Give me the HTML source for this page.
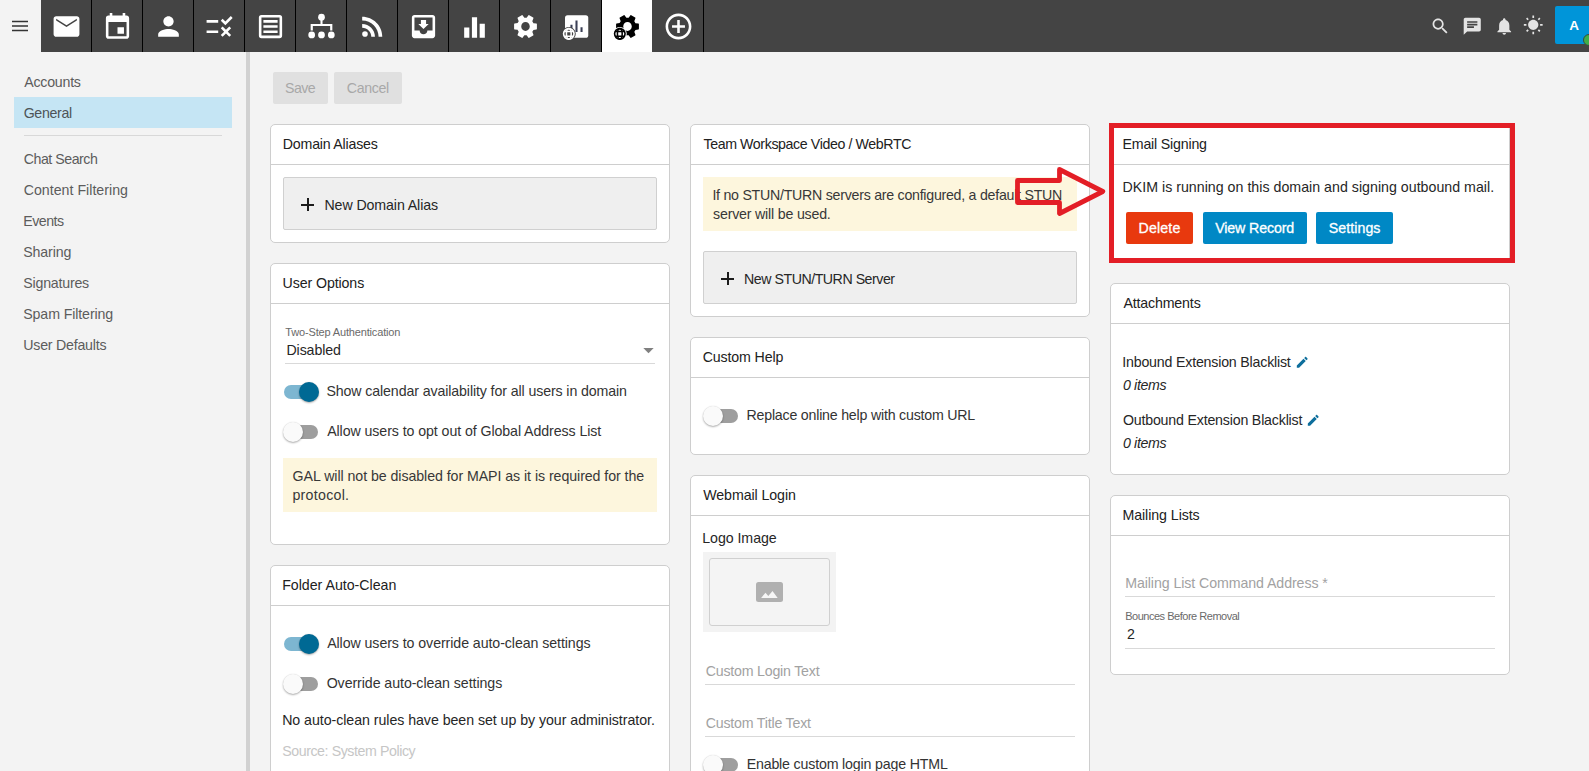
<!DOCTYPE html>
<html lang="en">
<head>
<meta charset="utf-8">
<title>Domain Settings - General</title>
<style>
*{box-sizing:border-box;margin:0;padding:0}
html,body{width:1589px;height:771px;overflow:hidden;background:#f3f3f3;font-family:"Liberation Sans",sans-serif;font-size:14.2px;color:#262626}
.abs{position:absolute}
#top{position:absolute;left:41px;top:0;width:1548px;height:52px;background:#444}
.tab{position:absolute;top:0;width:51px;height:52px;border-right:1px solid #000}
.tab svg{position:absolute;left:0;top:0}
.tab.active{background:#fff;border-right-color:#444}
#side{position:absolute;left:0;top:0;width:246px;height:771px}
.navbg{position:absolute;left:14px;top:97px;width:218px;height:31px;background:#c5e5f4}
#split{position:absolute;left:246px;top:52px;width:4px;height:719px;background:#d1d1d1}
.btn{position:absolute;height:32px;border-radius:2px}
.card{position:absolute;width:400px;background:#fff;border:1px solid #cecece;border-radius:5px}
.hl{position:absolute;left:0;top:39px;width:398px;height:1px;background:#cecece}
.t{position:absolute;white-space:nowrap;line-height:16px;color:#262626}
.t.h{color:#212121}
.t.nv{color:#5c5c5c}
.t.nv.sel{color:#4d5357}
.t.dis{color:#a8a8a8}
.t.tl{color:#333}
.t.nt{color:#383838}
.t.ph{color:#a2a2a2}
.t.src{color:#c6c6c6}
.t.sm{color:#6a6a6a}
.t.it{font-style:italic}
.t.bt{color:#fff;-webkit-text-stroke:.3px #fff}
.addbtn{position:absolute;left:12px;width:374px;height:53px;background:#efefef;border:1px solid #d0d0d0;border-radius:2px}
.plus{position:absolute;width:13px;height:13px}
.plus:before{content:"";position:absolute;left:0;top:5.5px;width:13px;height:2px;background:#1c1c1c}
.plus:after{content:"";position:absolute;left:5.5px;top:0;width:2px;height:13px;background:#1c1c1c}
.note{position:absolute;left:12px;width:374px;height:54px;background:#fdf6dd}
.tog{position:absolute;width:36px;height:20px}
.tog:before{content:"";position:absolute;left:1px;top:3px;width:34px;height:14px;border-radius:7px;background:#9e9e9e}
.tog:after{content:"";position:absolute;left:0;top:0;width:20px;height:20px;border-radius:50%;background:#fafafa;box-shadow:0 1px 2px rgba(0,0,0,.32),0 0 1px rgba(0,0,0,.12)}
.tog.on:before{background:#7db6d1}
.tog.on:after{left:16px;background:#006994}
.ul{position:absolute;height:1px;background:#d9d9d9}
</style>
</head>
<body>
<!-- hamburger -->
<svg class="abs" style="left:0;top:0" width="41" height="52"><path d="M12 21.5h16M12 26h16M12 30.5h16" stroke="#333" stroke-width="1.6"/></svg>
<div id="top">
<div class="tab" style="left:0px"><svg width="31" height="31" viewBox="0 0 24 24" style="left:10px;top:10.5px" fill="#fff"><path d="M20 4H4c-1.1 0-1.99.9-1.99 2L2 18c0 1.1.9 2 2 2h16c1.1 0 2-.9 2-2V6c0-1.1-.9-2-2-2zm0 3.300l-8 5-8-5V6l8 5 8-5v1.300z"/></svg></div>
<div class="tab" style="left:51px"><svg width="31" height="31" viewBox="0 0 24 24" style="left:10px;top:10.5px" fill="#fff"><path transform="translate(0 .55)" d="M17 12h-5v5h5v-5zM16 1v2H8V1H6v2H5c-1.11 0-1.99.9-1.99 2L3 19c0 1.1.89 2 2 2h14c1.1 0 2-.9 2-2V5c0-1.1-.9-2-2-2h-1V1h-2zm3 18H5V8h14v11z"/></svg></div>
<div class="tab" style="left:102px"><svg width="31" height="31" viewBox="0 0 24 24" style="left:10px;top:10.5px" fill="#fff"><path d="M12 12c2.21 0 4-1.79 4-4s-1.79-4-4-4-4 1.79-4 4 1.79 4 4 4zm0 2c-2.67 0-8 1.34-8 4v2h16v-2c0-2.66-5.33-4-8-4z"/></svg></div>
<div class="tab" style="left:153px"><svg width="31" height="31" viewBox="0 0 24 24" style="left:10px;top:10.5px" fill="#fff"><path d="M16.54 11L13 7.46l1.41-1.41 2.12 2.12 4.24-4.24 1.41 1.41L16.54 11zM11 7H2v2h9V7zm10 6.41L19.59 12 17 14.59 14.41 12 13 13.41 15.59 16 13 18.59 14.41 20 17 17.41 19.59 20 21 18.59 18.41 16 21 13.41zM11 15H2v2h9v-2z"/></svg></div>
<div class="tab" style="left:204px"><svg width="31" height="31" viewBox="0 0 24 24" style="left:10px;top:10.5px" fill="#fff"><path d="M19 5v14H5V5h14m0-2H5a2 2 0 0 0-2 2v14a2 2 0 0 0 2 2h14a2 2 0 0 0 2-2V5a2 2 0 0 0-2-2zM6.500 7h11v2h-11zM6.500 11h11v2h-11zM6.500 15h11v2h-11z"/></svg></div>
<div class="tab" style="left:255px"><svg width="31" height="31" viewBox="0 0 24 24" style="left:10px;top:10.5px" fill="#fff"><circle cx="12" cy="4.8" r="2.600"/><circle cx="4.4" cy="18.5" r="2.600"/><circle cx="12" cy="18.5" r="2.600"/><circle cx="19.6" cy="18.5" r="2.600"/><path d="M11.2 7h1.6v3h7.6v5h-1.7v-3.4H5.3V15H3.6v-5h7.6z"/></svg></div>
<div class="tab" style="left:306px"><svg width="31" height="31" viewBox="0 0 24 24" style="left:10px;top:10.5px" fill="#fff"><path d="M6.18 15.64a2.18 2.18 0 1 0 0 4.36 2.18 2.18 0 0 0 0-4.36zM4 4.44v2.83c7.03 0 12.73 5.7 12.73 12.73h2.83c0-8.59-6.97-15.56-15.56-15.56zm0 5.66v2.83c3.9 0 7.07 3.17 7.07 7.07h2.83c0-5.47-4.43-9.9-9.9-9.9z"/></svg></div>
<div class="tab" style="left:357px"><svg width="31" height="31" viewBox="0 0 24 24" style="left:10px;top:10.5px" fill="#fff"><path d="M19 3H4.99c-1.11 0-1.98.9-1.98 2L3 19c0 1.1.88 2 1.99 2H19c1.1 0 2-.9 2-2V5c0-1.1-.9-2-2-2zm0 12h-4c0 1.66-1.35 3-3 3s-3-1.34-3-3H4.99V5H19v10zm-3-5h-2V7h-4v3H8l4 4 4-4z"/></svg></div>
<div class="tab" style="left:408px"><svg width="31" height="31" viewBox="0 0 24 24" style="left:10px;top:10.5px" fill="#fff"><path transform="translate(0 .8)" d="M10 20h4V4h-4v16zm-6 0h4v-8H4v8zM16 9v11h4V9h-4z"/></svg></div>
<div class="tab" style="left:459px"><svg width="31" height="31" viewBox="0 0 24 24" style="left:10px;top:10.5px" fill="#fff"><g transform="translate(12 12) scale(1 1.030) rotate(90) scale(.92) translate(-12 -12)"><path d="M19.14 12.94c.04-.3.06-.61.06-.94 0-.32-.02-.64-.07-.94l2.03-1.58c.18-.14.23-.41.12-.61l-1.92-3.32c-.12-.22-.37-.29-.59-.22l-2.39.96c-.5-.38-1.03-.7-1.62-.94l-.36-2.54c-.04-.24-.24-.41-.48-.41h-3.84c-.24 0-.43.17-.47.41l-.36 2.54c-.59.24-1.13.57-1.62.94l-2.39-.96c-.22-.08-.47 0-.59.22L2.74 8.87c-.12.21-.08.47.12.61l2.03 1.58c-.05.3-.09.63-.09.94s.02.64.07.94l-2.03 1.58c-.18.14-.23.41-.12.61l1.92 3.32c.12.22.37.29.59.22l2.39-.96c.5.38 1.03.7 1.62.94l.36 2.54c.05.24.24.41.48.41h3.84c.24 0 .44-.17.47-.41l.36-2.54c.59-.24 1.13-.56 1.62-.94l2.39.96c.22.08.47 0 .59-.22l1.92-3.32c.12-.22.07-.47-.12-.61l-2.01-1.58zM12 15.600c-1.98 0-3.600-1.620-3.600-3.600s1.620-3.600 3.600-3.600 3.600 1.620 3.600 3.600-1.620 3.600-3.600 3.600z"/></g></svg></div>
<div class="tab" style="left:510px"><svg width="31" height="31" viewBox="0 0 24 24" style="left:10px;top:10.5px" fill="#fff"><rect x="3.100" y="3.200" width="18" height="17.500" rx="2"/><path fill="#3a3f55" d="M7.300 10.700h1.600v5.500h-1.600zM11.200 7.400h1.600v8.800h-1.600zM15.100 12.600h1.600v3.600h-1.600z"/><circle cx="6.05" cy="17.7" r="5.400" fill="#444"/><g fill="none" stroke="#fff" stroke-width="1.200"><circle cx="6.05" cy="17.7" r="4.050" fill="#444" stroke-width="1.250"/><ellipse cx="6.05" cy="17.7" rx="1.850" ry="4.050"/><path d="M2.450 15.800h7.200M2.450 19.600h7.200"/></g></svg></div>
<div class="tab active" style="left:561px"><svg width="31" height="31" viewBox="0 0 24 24" style="left:10px;top:10.5px" fill="#000"><g transform="translate(12 12) scale(1 1.030) rotate(90) scale(.92) translate(-12 -12)"><path d="M19.14 12.94c.04-.3.06-.61.06-.94 0-.32-.02-.64-.07-.94l2.03-1.58c.18-.14.23-.41.12-.61l-1.92-3.32c-.12-.22-.37-.29-.59-.22l-2.39.96c-.5-.38-1.03-.7-1.62-.94l-.36-2.54c-.04-.24-.24-.41-.48-.41h-3.84c-.24 0-.43.17-.47.41l-.36 2.54c-.59.24-1.13.57-1.62.94l-2.39-.96c-.22-.08-.47 0-.59.22L2.74 8.87c-.12.21-.08.47.12.61l2.03 1.58c-.05.3-.09.63-.09.94s.02.64.07.94l-2.03 1.58c-.18.14-.23.41-.12.61l1.92 3.32c.12.22.37.29.59.22l2.39-.96c.5.38 1.03.7 1.62.94l.36 2.54c.05.24.24.41.48.41h3.84c.24 0 .44-.17.47-.41l.36-2.54c.59-.24 1.13-.56 1.62-.94l2.39.96c.22.08.47 0 .59-.22l1.92-3.32c.12-.22.07-.47-.12-.61l-2.01-1.58zM12 15.600c-1.98 0-3.600-1.620-3.600-3.600s1.620-3.600 3.600-3.600 3.600 1.620 3.600 3.600-1.620 3.600-3.600 3.600z"/></g><circle cx="6.05" cy="17.7" r="5.400" fill="#fff"/><g fill="none" stroke="#000" stroke-width="1.200"><circle cx="6.05" cy="17.7" r="4.050" fill="#fff" stroke-width="1.250"/><ellipse cx="6.05" cy="17.7" rx="1.850" ry="4.050"/><path d="M2.450 15.800h7.200M2.450 19.600h7.200"/></g></svg></div>
<div class="tab" style="left:612px"><svg width="31" height="31" viewBox="0 0 24 24" style="left:10px;top:10.5px" fill="#fff"><path d="M13 7h-2v4H7v2h4v4h2v-4h4v-2h-4V7zm-1-5C6.480 2 2 6.480 2 12s4.480 10 10 10 10-4.480 10-10S17.520 2 12 2zm0 18c-4.410 0-8-3.590-8-8s3.590-8 8-8 8 3.590 8 8-3.590 8-8 8z"/></svg></div>
<svg class="abs" style="left:1388.85px;top:16.05px" width="20.5" height="20.5" viewBox="0 0 24 24" fill="#e4e4e4"><path d="M15.5 14h-.79l-.28-.27C15.41 12.59 16 11.11 16 9.5 16 5.91 13.09 3 9.5 3S3 5.91 3 9.5 5.91 16 9.5 16c1.61 0 3.090-.59 4.230-1.570l.27.28v.79l5 4.990L20.490 19l-4.990-5zm-6 0C7.010 14 5 11.990 5 9.500S7.010 5 9.500 5 14 7.010 14 9.500 11.990 14 9.500 14z"/></svg>
<svg class="abs" style="left:1420.75px;top:15.55px" width="20.5" height="20.5" viewBox="0 0 24 24" fill="#e4e4e4"><path d="M20 2H4c-1.100 0-1.990.9-1.990 2L2 22l4-4h14c1.100 0 2-.9 2-2V4c0-1.100-.9-2-2-2zM6 9h12v2H6V9zm8 5H6v-2h8v2zm4-6H6V6h12v2z"/></svg>
<svg class="abs" style="left:1452.75px;top:16.05px" width="20.5" height="20.5" viewBox="0 0 24 24" fill="#e4e4e4"><path d="M12 22c1.100 0 2-.9 2-2h-4c0 1.100.89 2 2 2zm6-6v-5c0-3.070-1.640-5.640-4.500-6.320V4c0-.83-.67-1.500-1.500-1.500s-1.500.67-1.500 1.500v.68C7.630 5.360 6 7.920 6 11v5l-2 2v1h16v-1l-2-2z"/></svg>
<svg class="abs" style="left:1482.20px;top:15.10px" width="20.500" height="20.500" viewBox="0 0 24 24" fill="#e4e4e4"><path d="M6.760 4.840l-1.800-1.790-1.410 1.410 1.790 1.790 1.420-1.410zM4 10.500H1v2h3v-2zm9-9.950h-2V3.500h2V.55zm7.450 3.910l-1.410-1.410-1.790 1.790 1.410 1.410 1.790-1.790zm-3.210 13.700l1.790 1.800 1.410-1.410-1.800-1.790-1.400 1.400zM20 10.500v2h3v-2h-3zm-8-5c-3.310 0-6 2.690-6 6s2.690 6 6 6 6-2.690 6-6-2.690-6-6-6zm-1 16.950h2V19.500h-2v2.950zm-7.450-3.910l1.410 1.410 1.790-1.800-1.410-1.410-1.790 1.800z"/></svg>
<div class="abs" style="left:1514px;top:6px;width:38px;height:38px;border-radius:2px;background:#0095d9;color:#fff;font-weight:bold;font-size:13.500px;line-height:39px;text-align:center">A</div><div class="abs" style="left:1542px;top:34px;width:12px;height:12px;border-radius:50%;background:#3fae49;border:1.5px solid #3a4a3a"></div>
</div>


<div id="side">
<div class="navbg"></div>
<div class="abs" style="left:24px;top:135px;width:198px;height:1px;background:#d8d8d8"></div>
<span id="t_nav0" class="t nv" style="left:24.18px;top:74.00px;font-size:14.2px;letter-spacing:-0.228px;">Accounts</span>
<span id="t_nav1" class="t nv sel" style="left:23.65px;top:105.00px;font-size:14.2px;letter-spacing:-0.321px;">General</span>
<span id="t_nav2" class="t nv" style="left:23.70px;top:151.00px;font-size:14.2px;letter-spacing:-0.471px;">Chat Search</span>
<span id="t_nav3" class="t nv" style="left:23.70px;top:182.00px;font-size:14.2px;letter-spacing:0.009px;">Content Filtering</span>
<span id="t_nav4" class="t nv" style="left:23.30px;top:213.00px;font-size:14.2px;letter-spacing:-0.538px;">Events</span>
<span id="t_nav5" class="t nv" style="left:23.25px;top:244.00px;font-size:14.2px;letter-spacing:-0.140px;">Sharing</span>
<span id="t_nav6" class="t nv" style="left:23.25px;top:275.00px;font-size:14.2px;letter-spacing:-0.208px;">Signatures</span>
<span id="t_nav7" class="t nv" style="left:23.25px;top:306.00px;font-size:14.2px;letter-spacing:-0.116px;">Spam Filtering</span>
<span id="t_nav8" class="t nv" style="left:23.31px;top:337.00px;font-size:14.2px;letter-spacing:-0.229px;">User Defaults</span>
</div>
<div id="split"></div>
<div class="btn" style="left:273px;top:72px;width:55px;background:#e0e0e0"></div><span id="t_save" class="t dis" style="left:285.10px;top:80.00px;font-size:14.2px;letter-spacing:-0.618px;">Save</span>
<div class="btn" style="left:334px;top:72px;width:68px;background:#e0e0e0"></div><span id="t_cancel" class="t dis" style="left:346.73px;top:80.00px;font-size:14.2px;letter-spacing:-0.323px;">Cancel</span>
<!-- COLUMN 1 -->
<div class="card" style="left:270px;top:124px;height:119px"><span id="t_h_da" class="t h" style="left:11.85px;top:11.00px;font-size:14.2px;letter-spacing:-0.220px;">Domain Aliases</span><div class="hl"></div>
<div class="addbtn" style="top:52px"></div><i class="plus" style="left:30.0px;top:73.0px"></i><span id="t_nda" class="t" style="left:53.47px;top:72.00px;font-size:14.2px;letter-spacing:-0.101px;">New Domain Alias</span>
</div>
<div class="card" style="left:270px;top:263px;height:282px"><span id="t_h_uo" class="t h" style="left:11.52px;top:11.00px;font-size:14.2px;letter-spacing:-0.095px;">User Options</span><div class="hl"></div>
<span id="t_tsa" class="t sm" style="left:14.32px;top:60.00px;font-size:11px;letter-spacing:-0.160px;">Two-Step Authentication</span>
<span id="t_dis" class="t" style="left:15.47px;top:78.00px;font-size:14.2px;letter-spacing:-0.115px;">Disabled</span>
<svg class="abs" style="left:372px;top:84px" width="11" height="6"><path d="M0.300 0h10.400l-5.200 5.200z" fill="#808080"/></svg>
<div class="ul" style="left:14px;top:99px;width:370px"></div>
<div class="tog on" style="left:12px;top:118px"></div>
<span id="t_showcal" class="t tl" style="left:55.39px;top:119.00px;font-size:14.2px;letter-spacing:-0.109px;">Show calendar availability for all users in domain</span>
<div class="tog" style="left:12px;top:158px"></div>
<span id="t_optout" class="t tl" style="left:56.16px;top:159.00px;font-size:14.2px;letter-spacing:-0.079px;">Allow users to opt out of Global Address List</span>
<div class="note" style="top:194px"></div><span id="t_gal1" class="t nt" style="left:21.62px;top:204.00px;font-size:14.2px;letter-spacing:-0.061px;">GAL will not be disabled for MAPI as it is required for the</span><span id="t_gal2" class="t nt" style="left:21.40px;top:223.00px;font-size:14.2px;letter-spacing:0.281px;">protocol.</span>
</div>
<div class="card" style="left:270px;top:565px;height:230px"><span id="t_h_fa" class="t h" style="left:11.15px;top:11.00px;font-size:14.2px;letter-spacing:-0.012px;">Folder Auto-Clean</span><div class="hl"></div>
<div class="tog on" style="left:12px;top:68px"></div>
<span id="t_allowov" class="t tl" style="left:56.16px;top:69.00px;font-size:14.2px;letter-spacing:-0.074px;">Allow users to override auto-clean settings</span>
<div class="tog" style="left:12px;top:108px"></div>
<span id="t_ovr" class="t tl" style="left:55.65px;top:109.00px;font-size:14.2px;letter-spacing:-0.068px;">Override auto-clean settings</span>
<span id="t_norules" class="t" style="left:11.14px;top:146.00px;font-size:14.2px;letter-spacing:-0.046px;">No auto-clean rules have been set up by your administrator.</span>
<span id="t_src" class="t src" style="left:11.17px;top:177.00px;font-size:14.2px;letter-spacing:-0.419px;">Source: System Policy</span>
</div>
<!-- COLUMN 2 -->
<div class="card" style="left:690px;top:124px;height:193px"><span id="t_h_tw" class="t h" style="left:12.45px;top:11.00px;font-size:14.2px;letter-spacing:-0.392px;">Team Workspace Video / WebRTC</span><div class="hl"></div>
<div class="note" style="top:52px"></div><span id="t_stun1" class="t nt" style="left:21.41px;top:62.00px;font-size:14.2px;letter-spacing:-0.257px;">If no STUN/TURN servers are configured, a default STUN</span><span id="t_stun2" class="t nt" style="left:22.09px;top:81.00px;font-size:14.2px;letter-spacing:-0.195px;">server will be used.</span>
<div class="addbtn" style="top:126px"></div><i class="plus" style="left:30.0px;top:147.0px"></i><span id="t_nst" class="t" style="left:53.06px;top:146.00px;font-size:14.2px;letter-spacing:-0.475px;">New STUN/TURN Server</span>
</div>
<div class="card" style="left:690px;top:337px;height:118px"><span id="t_h_ch" class="t h" style="left:11.70px;top:11.00px;font-size:14.2px;letter-spacing:-0.132px;">Custom Help</span><div class="hl"></div>
<div class="tog" style="left:12px;top:68px"></div>
<span id="t_repl" class="t tl" style="left:55.47px;top:69.00px;font-size:14.2px;letter-spacing:-0.206px;">Replace online help with custom URL</span>
</div>
<div class="card" style="left:690px;top:475px;height:320px"><span id="t_h_wl" class="t h" style="left:12.22px;top:11.00px;font-size:14.2px;letter-spacing:-0.080px;">Webmail Login</span><div class="hl"></div>
<span id="t_logo" class="t" style="left:11.27px;top:54.00px;font-size:14.2px;letter-spacing:-0.057px;">Logo Image</span>
<div class="abs" style="left:12px;top:76px;width:133px;height:80px;background:#f3f3f3"></div><div class="abs" style="left:18px;top:82px;width:121px;height:68px;background:#f4f4f4;border:1px solid #d0d0d0;border-radius:3px"></div><svg class="abs" style="left:65px;top:106px" width="27" height="20" viewBox="0 0 27 20"><rect width="27" height="20" rx="2.500" fill="#b0b0b0"/><path d="M5.100 15.900L9.500 10.700L12.300 14.100L16.500 8.900L21.700 15.900Z" fill="#f6f6f6"/></svg>
<span id="t_clt" class="t ph" style="left:14.68px;top:187.00px;font-size:14.2px;letter-spacing:-0.207px;">Custom Login Text</span>
<div class="ul" style="left:14px;top:208px;width:370px"></div>
<span id="t_ctt" class="t ph" style="left:14.68px;top:239.00px;font-size:14.2px;letter-spacing:-0.199px;">Custom Title Text</span>
<div class="ul" style="left:14px;top:260px;width:370px"></div>
<div class="tog" style="left:12px;top:279px"></div>
<span id="t_ench" class="t tl" style="left:55.65px;top:280.00px;font-size:14.2px;letter-spacing:-0.168px;">Enable custom login page HTML</span>
</div>
<!-- COLUMN 3 -->
<div class="card" style="left:1110px;top:124px;height:139px"><span id="t_h_es" class="t h" style="left:11.47px;top:11.00px;font-size:14.2px;letter-spacing:-0.186px;">Email Signing</span><div class="hl"></div>
<span id="t_dkim" class="t" style="left:11.47px;top:54.00px;font-size:14.2px;letter-spacing:0.018px;">DKIM is running on this domain and signing outbound mail.</span>
<div class="btn" style="left:15px;top:87px;width:67px;background:#e8390e"></div>
<span id="t_del" class="t bt" style="left:27.52px;top:95.00px;font-size:14.2px;letter-spacing:0.154px;">Delete</span>
<div class="btn" style="left:92px;top:87px;width:104px;background:#0088c5"></div>
<span id="t_view" class="t bt" style="left:104.20px;top:95.00px;font-size:14.2px;letter-spacing:-0.118px;">View Record</span>
<div class="btn" style="left:205px;top:87px;width:77px;background:#0088c5"></div>
<span id="t_sett" class="t bt" style="left:217.74px;top:95.00px;font-size:14.2px;letter-spacing:0.063px;">Settings</span>
</div>
<div class="abs" style="left:1109px;top:123px;width:406px;height:140px;border:5px solid #e31e26"></div>
<svg class="abs" style="left:1005px;top:160px" width="110" height="62" viewBox="1005 160 110 62"><path d="M1017.500 180.500H1059.500V169.500L1102.800 191.500L1059.500 213.500V202.500H1017.500Z" fill="none" stroke="#e31e26" stroke-width="4.800" stroke-linejoin="round"/></svg>
<div class="card" style="left:1110px;top:283px;height:192px"><span id="t_h_at" class="t h" style="left:12.39px;top:11.00px;font-size:14.2px;letter-spacing:-0.149px;">Attachments</span><div class="hl"></div>
<span id="t_inb" class="t" style="left:11.26px;top:70.00px;font-size:14.2px;letter-spacing:-0.190px;">Inbound Extension Blacklist</span>
<svg class="abs" style="left:183.5px;top:71.19999999999999px" width="14.500" height="14.500" viewBox="0 0 24 24" fill="#0d6e9c"><path d="M3 17.250V21h3.750L17.810 9.940l-3.750-3.750L3 17.250zM20.710 7.040c.39-.39.39-1.020 0-1.410l-2.340-2.340c-.39-.39-1.020-.39-1.410 0l-1.830 1.830 3.750 3.750 1.830-1.830z"/></svg>
<span id="t_it1" class="t it" style="left:11.91px;top:93.00px;font-size:14.2px;letter-spacing:-0.328px;">0 items</span>
<span id="t_outb" class="t" style="left:11.88px;top:128.00px;font-size:14.2px;letter-spacing:-0.185px;">Outbound Extension Blacklist</span>
<svg class="abs" style="left:195px;top:129.2px" width="14.500" height="14.500" viewBox="0 0 24 24" fill="#0d6e9c"><path d="M3 17.250V21h3.750L17.810 9.940l-3.750-3.750L3 17.250zM20.710 7.040c.39-.39.39-1.020 0-1.410l-2.340-2.340c-.39-.39-1.020-.39-1.410 0l-1.830 1.830 3.750 3.750 1.830-1.830z"/></svg>
<span id="t_it2" class="t it" style="left:11.91px;top:151.00px;font-size:14.2px;letter-spacing:-0.328px;">0 items</span>
</div>
<div class="card" style="left:1110px;top:495px;height:180px"><span id="t_h_ml" class="t h" style="left:11.47px;top:11.00px;font-size:14.2px;letter-spacing:-0.069px;">Mailing Lists</span><div class="hl"></div>
<span id="t_mlca" class="t ph" style="left:14.15px;top:79.00px;font-size:14.2px;letter-spacing:-0.080px;">Mailing List Command Address *</span>
<div class="ul" style="left:14px;top:100px;width:370px"></div>
<span id="t_bbr" class="t sm" style="left:14.15px;top:112.00px;font-size:11px;letter-spacing:-0.479px;">Bounces Before Removal</span>
<span id="t_two" class="t" style="left:16.02px;top:130.00px;font-size:14.2px;letter-spacing:0.000px;">2</span>
<div class="ul" style="left:14px;top:152px;width:370px"></div>
</div>
</body>
</html>
